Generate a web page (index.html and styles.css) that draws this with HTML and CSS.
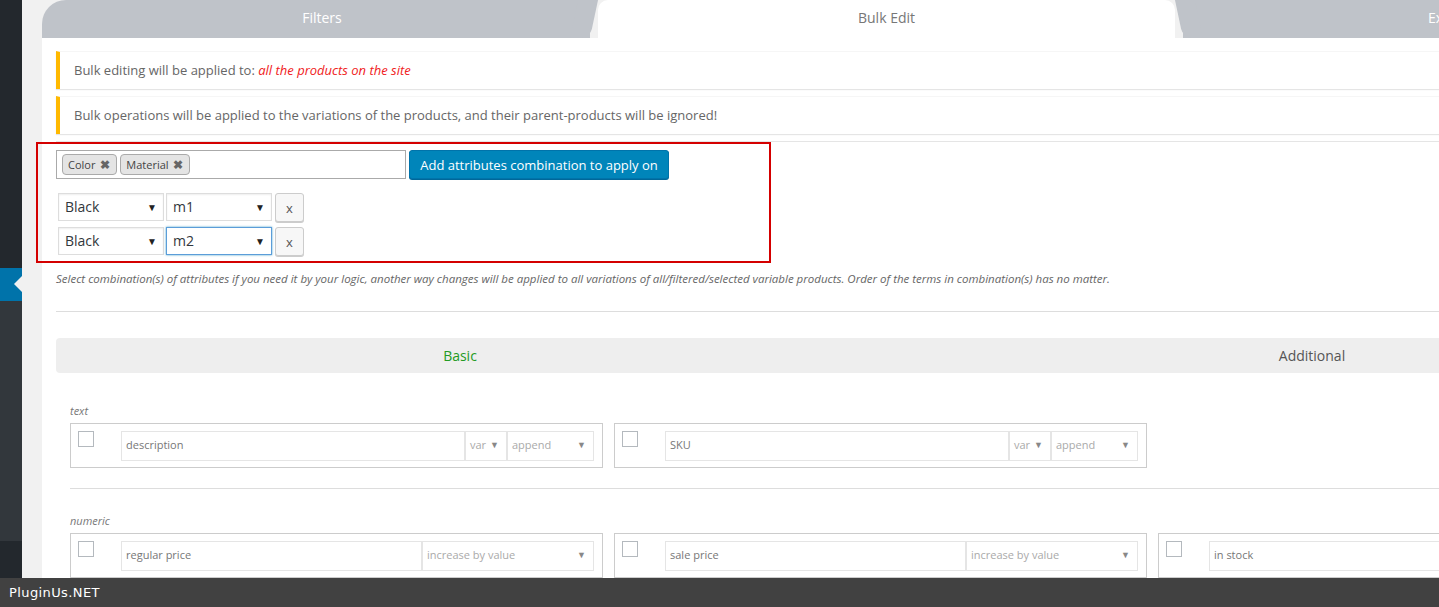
FILE: index.html
```html
<!DOCTYPE html>
<html lang="en">
<head>
  <meta charset="UTF-8">
  <title>Bulk Edit</title>
  <link rel="stylesheet" href="styles.css">
</head>
<body>

<div class="admin">
  <!-- wp admin menu strip -->
  <nav class="adminmenu">
    <div class="menu-top"></div>
    <div class="menu-current"></div>
    <div class="menu-sub"></div>
    <div class="menu-rest"></div>
  </nav>

  <main class="wrap">
    <div class="tabs">
      <div class="tab tab-left">Filters</div>
      <div class="tab tab-active">Bulk Edit</div>
      <div class="tab tab-right">Export</div>
    </div>

    <section class="panel">
      <div class="notice">Bulk editing will be applied to: <em class="red">all the products on the site</em></div>
      <div class="notice">Bulk operations will be applied to the variations of the products, and their parent-products will be ignored!</div>

      <div class="attrs">
        <div class="attrs-top">
          <div class="tags-input">
            <span class="chip">Color <b>&#10006;</b></span>
            <span class="chip">Material <b>&#10006;</b></span>
          </div>
          <button class="btn-primary">Add attributes combination to apply on</button>
        </div>
        <div class="combo">
          <div class="select">Black<span class="arrow">&#9660;</span></div>
          <div class="select">m1<span class="arrow">&#9660;</span></div>
          <button class="btn-x">x</button>
        </div>
        <div class="combo">
          <div class="select">Black<span class="arrow">&#9660;</span></div>
          <div class="select focus">m2<span class="arrow">&#9660;</span></div>
          <button class="btn-x">x</button>
        </div>
        <div class="highlight"></div>
      </div>

      <p class="hint">Select combination(s) of attributes if you need it by your logic, another way changes will be applied to all variations of all/filtered/selected variable products. Order of the terms in combination(s) has no matter.</p>
      <hr class="sep">

      <div class="subtabs">
        <div class="subtab subtab-basic active">Basic</div>
        <div class="subtab subtab-add">Additional</div>
      </div>

      <div class="group group-text">
        <div class="group-title">text</div>
        <div class="fields">
          <div class="field">
            <span class="check"></span>
            <div class="ctrl">
              <div class="inp">description</div>
              <div class="sel sel-var">var<span class="arrow">&#9660;</span></div>
              <div class="sel sel-mode">append<span class="arrow">&#9660;</span></div>
            </div>
          </div>
          <div class="field">
            <span class="check"></span>
            <div class="ctrl">
              <div class="inp">SKU</div>
              <div class="sel sel-var">var<span class="arrow">&#9660;</span></div>
              <div class="sel sel-mode">append<span class="arrow">&#9660;</span></div>
            </div>
          </div>
        </div>
      </div>

      <hr class="sep sep-group">

      <div class="group group-num">
        <div class="group-title">numeric</div>
        <div class="fields">
          <div class="field">
            <span class="check"></span>
            <div class="ctrl">
              <div class="inp">regular price</div>
              <div class="sel sel-op">increase by value<span class="arrow">&#9660;</span></div>
            </div>
          </div>
          <div class="field">
            <span class="check"></span>
            <div class="ctrl">
              <div class="inp">sale price</div>
              <div class="sel sel-op">increase by value<span class="arrow">&#9660;</span></div>
            </div>
          </div>
          <div class="field">
            <span class="check"></span>
            <div class="ctrl">
              <div class="inp">in stock</div>
            </div>
          </div>
        </div>
      </div>
    </section>
  </main>
</div>

<footer class="credit">PluginUs.NET</footer>

</body>
</html>
```

FILE: styles.css
```css
html, body {
  margin: 0;
  overflow: hidden;
}

body {
  font-family: 'Open Sans', 'Liberation Sans', sans-serif;
  background: #f1f1f1;
  color: #555;
}

.admin {
  display: flex;
  min-height: 100vh;
}

/* left admin menu */
.adminmenu {
  width: 22px;
  flex: none;
  display: flex;
  flex-direction: column;
  background: #23282d;
}
.menu-top { height: 268px; }
.menu-current {
  height: 33px;
  background: #0073aa;
  position: relative;
}
.menu-current::after {
  content: "";
  position: absolute;
  right: 0;
  top: 8px;
  border: 8px solid transparent;
  border-right-color: #f1f1f1;
}
.menu-sub {
  height: 240px;
  background: #32373c;
}
.menu-rest { flex: 1; }

.wrap {
  margin-left: 20px;
  width: 1760px;
  flex: none;
}

/* top tabs */
.tabs {
  display: flex;
  height: 38px;
  background: #f1f1f1;
}
.tab {
  position: relative;
  line-height: 35px;
  font-size: 14px;
  text-align: center;
}
.tab-left {
  width: 536px;
  padding-left: 12px;
  background: #bfc3c9;
  color: #fff;
  border-top-left-radius: 24px;
}
.tab-left::after {
  content: "";
  position: absolute;
  top: 0;
  right: -4px;
  width: 20px;
  height: 100%;
  background: #bfc3c9;
  transform: skewX(-12deg);
  border-bottom-right-radius: 9px;
}
.tab-active {
  width: 577px;
  margin-left: 8px;
  background: #fff;
  color: #777;
  border-radius: 10px 10px 0 0;
}
.tab-right {
  width: 315px;
  margin-left: 8px;
  padding-left: 245px;
  text-align: left;
  background: #bfc3c9;
  color: #fff;
}
.tab-right::before {
  content: "";
  position: absolute;
  top: 0;
  left: -4px;
  width: 20px;
  height: 100%;
  background: #bfc3c9;
  transform: skewX(12deg);
  border-bottom-left-radius: 9px;
}

.panel {
  background: #fff;
  padding: 13px 0 60px 14px;
}

/* notices */
.notice {
  background: #fff;
  border-left: 4px solid #ffb900;
  border-top: 1px solid #f6f6f6;
  box-shadow: 0 1px 1px rgba(0, 0, 0, 0.1);
  padding: 8px 14px 9px;
  line-height: 20px;
  font-size: 13px;
  color: #666;
  margin-bottom: 7px;
}
.notice .red {
  color: #f02222;
}

/* attributes combination */
.attrs {
  position: relative;
  border-top: 1px solid #e5e5e5;
  padding-top: 8px;
}
.attrs-top {
  display: flex;
  gap: 3px;
}
.tags-input {
  width: 350px;
  height: 29px;
  box-sizing: border-box;
  border: 1px solid #aaa;
  display: flex;
  align-items: center;
  gap: 3px;
  padding-left: 5px;
}
.chip {
  height: 21px;
  box-sizing: border-box;
  border: 1px solid #aaa;
  border-radius: 4px;
  background: #e4e4e4;
  font-size: 11px;
  line-height: 19px;
  padding: 0 6px 0 5px;
  color: #444;
}
.chip b {
  font-size: 12px;
  color: #666;
  margin-left: 2px;
}
.btn-primary {
  height: 29px;
  width: 260px;
  padding: 0;
  background: #0085ba;
  border: 1px solid #0073aa;
  border-radius: 3px;
  box-shadow: 0 1px 0 #006799;
  color: #fff;
  font-family: inherit;
  font-size: 13px;
}

.combo {
  display: flex;
  margin: 14px 0 0 2px;
}
.combo + .combo {
  margin-top: 5px;
}
.select {
  position: relative;
  width: 106px;
  height: 28px;
  box-sizing: border-box;
  border: 1px solid #ddd;
  box-shadow: inset 0 1px 2px rgba(0, 0, 0, 0.07);
  margin-right: 2px;
  padding-left: 6px;
  font-size: 14px;
  line-height: 26px;
  color: #32373c;
}
.select.focus {
  border-color: #5b9dd9;
  box-shadow: 0 0 2px rgba(30, 140, 190, 0.8);
}
.select .arrow {
  position: absolute;
  right: 6px;
  top: 0;
  font-size: 10px;
  color: #222;
}
.btn-x {
  width: 29px;
  height: 29px;
  margin-left: 1px;
  padding: 0;
  background: #f7f7f7;
  border: 1px solid #ccc;
  border-radius: 3px;
  box-shadow: 0 1px 0 #ccc;
  color: #555;
  font-family: inherit;
  font-size: 13px;
}

/* red frame drawn over the block */
.highlight {
  position: absolute;
  left: -20px;
  top: 0;
  width: 735px;
  height: 121px;
  box-sizing: border-box;
  border: 2px solid #d40000;
}

.hint {
  margin: 15px 0 0;
  font-size: 11.5px;
  line-height: 16px;
  font-style: italic;
  color: #666;
}

.sep {
  border: 0;
  border-top: 1px solid #ddd;
  margin: 24px 0 0;
}
.sep-group {
  margin: 20px 0 0 14px;
}

/* basic / additional */
.subtabs {
  display: flex;
  height: 35px;
  margin-top: 26px;
  background: #eee;
  border-radius: 4px 0 0 4px;
  font-size: 14px;
  line-height: 35px;
}
.subtab {
  text-align: center;
  color: #555;
}
.subtab-basic { width: 808px; }
.subtab-add { width: 896px; }
.subtab.active { color: #239a23; }

/* field groups */
.group {
  padding-left: 14px;
}
.group-title {
  font-size: 11px;
  line-height: 16px;
  font-style: italic;
  color: #777;
}
.group-text .group-title { margin-top: 30px; }
.group-num .group-title { margin-top: 24px; }
.fields {
  display: flex;
  gap: 11px;
  margin-top: 4px;
}
.field {
  width: 533px;
  flex: none;
  box-sizing: border-box;
  border: 1px solid #ccc;
  padding: 7px 8px 6px 7px;
  display: flex;
}
.check {
  width: 16px;
  height: 16px;
  box-sizing: border-box;
  border: 1px solid #b4b9be;
  margin-right: 27px;
  flex: none;
}
.ctrl {
  flex: 1;
  display: flex;
  height: 30px;
}
.inp, .sel {
  position: relative;
  box-sizing: border-box;
  border: 1px solid #e5e5e5;
  font-size: 11px;
  line-height: 26px;
  padding-left: 4px;
}
.inp {
  flex: 1;
  color: #777;
}
.sel {
  flex: none;
  color: #aaa;
}
.sel .arrow {
  position: absolute;
  right: 7px;
  top: 0;
  font-size: 9px;
  color: #888;
}
.sel-var { width: 42px; }
.sel-mode { width: 87px; }
.sel-op { width: 172px; }

/* bottom credit bar */
.credit {
  position: fixed;
  left: 0;
  right: 0;
  bottom: 0;
  height: 29px;
  background: #414141;
  color: #fff;
  font-family: 'DejaVu Sans', sans-serif;
  font-size: 13px;
  letter-spacing: 0.4px;
  line-height: 29px;
  padding-left: 9px;
}
```
